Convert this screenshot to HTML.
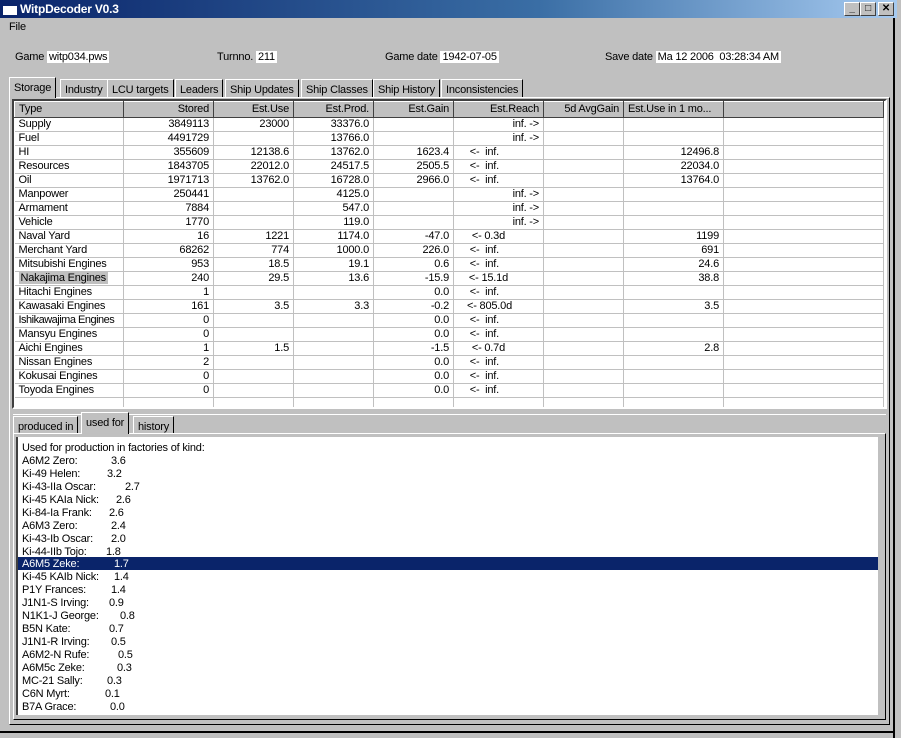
<!DOCTYPE html>
<html><head><meta charset="utf-8"><style>
*{margin:0;padding:0;box-sizing:border-box}
body{width:901px;height:738px;background:#c0c0c0;font-family:"Liberation Sans",sans-serif;font-size:11px;letter-spacing:-0.2px;color:#000;position:relative;overflow:hidden}
.a{position:absolute;white-space:nowrap}
.title{left:0;top:0;width:897px;height:18px;background:linear-gradient(90deg,#0a246a,#3a6ea5 60%,#a6caf0);color:#fff;font-weight:bold;font-size:12px;line-height:18px;padding-left:20px}
.btn{top:2px;width:16px;height:14px;background:#c0c0c0;border:1px solid;border-color:#fff #404040 #404040 #fff;color:#000;font-size:10px;line-height:11px;text-align:center;font-weight:bold}
.w{background:#fff;padding:0 2px}
.tab{top:79px;height:19px;border:1px solid;border-color:#fff #000 transparent #fff;border-bottom:none;padding:3px 4px 0;line-height:14px;background:#c0c0c0}
table{border-collapse:collapse;table-layout:fixed}
td{height:14px;line-height:13px;border-right:1px solid #c0c0c0;border-bottom:1px solid #c0c0c0;text-align:right;padding:0 4px;white-space:nowrap;overflow:hidden}
td:first-child{text-align:left}
tr.h td{height:16px;line-height:15px;background:#c0c0c0;border:1px solid;border-color:#fff #404040 #404040 #fff}
.lst div{height:12.95px;line-height:14px;padding-left:4px;position:relative}
.lst b{font-weight:normal;position:absolute;top:0}
</style></head><body>
<div class="a title">WitpDecoder V0.3</div>
<div class="a" style="left:3px;top:3px;width:14px;height:12px;background:#fff;border-top:3px solid #0a246a"></div>
<div class="a btn" style="left:844px">_</div>
<div class="a btn" style="left:860px">□</div>
<div class="a btn" style="left:878px">✕</div>
<div class="a" style="left:893px;top:18px;width:2px;height:720px;background:#000"></div>
<div class="a" style="left:9px;top:21px">File</div>
<div class="a" style="left:15px;top:51px">Game <span class="w">witp034.pws</span></div>
<div class="a" style="left:217px;top:51px">Turnno. <span class="w">211</span></div>
<div class="a" style="left:385px;top:51px">Game date <span class="w">1942-07-05</span></div>
<div class="a" style="left:605px;top:51px">Save date <span class="w">Ma 12 2006 &nbsp;03:28:34 AM</span></div>
<div class="a tab" style="left:9px;top:77px;height:21px;z-index:2">Storage</div>
<div class="a tab" style="left:60px">Industry</div>
<div class="a tab" style="left:107px">LCU targets</div>
<div class="a tab" style="left:175px">Leaders</div>
<div class="a tab" style="left:225px">Ship Updates</div>
<div class="a tab" style="left:301px">Ship Classes</div>
<div class="a tab" style="left:373px">Ship History</div>
<div class="a tab" style="left:441px">Inconsistencies</div>
<div class="a" style="left:9px;top:97px;width:881px;height:628px;border:1px solid;border-color:#fff #000 #000 #fff"></div>
<div class="a" style="left:12px;top:99px;width:875px;height:310px;border:2px solid;border-color:#404040 #fff #fff #404040;background:#fff;overflow:hidden">
<table style="width:870px">
<colgroup><col style="width:109px"><col style="width:90px"><col style="width:80px"><col style="width:80px"><col style="width:80px"><col style="width:90px"><col style="width:80px"><col style="width:100px"><col></colgroup>
<tr class="h"><td>Type</td><td>Stored</td><td>Est.Use</td><td>Est.Prod.</td><td>Est.Gain</td><td>Est.Reach</td><td>5d AvgGain</td><td style="text-align:left">Est.Use in 1 mo...</td><td></td></tr>
<tr><td>Supply</td><td>3849113</td><td>23000</td><td>33376.0</td><td></td><td>inf. -&gt;</td><td></td><td></td><td></td></tr>
<tr><td>Fuel</td><td>4491729</td><td></td><td>13766.0</td><td></td><td>inf. -&gt;</td><td></td><td></td><td></td></tr>
<tr><td>HI</td><td>355609</td><td>12138.6</td><td>13762.0</td><td>1623.4</td><td style="padding-right:44px">&lt;- &nbsp;inf.</td><td></td><td>12496.8</td><td></td></tr>
<tr><td>Resources</td><td>1843705</td><td>22012.0</td><td>24517.5</td><td>2505.5</td><td style="padding-right:44px">&lt;- &nbsp;inf.</td><td></td><td>22034.0</td><td></td></tr>
<tr><td>Oil</td><td>1971713</td><td>13762.0</td><td>16728.0</td><td>2966.0</td><td style="padding-right:44px">&lt;- &nbsp;inf.</td><td></td><td>13764.0</td><td></td></tr>
<tr><td>Manpower</td><td>250441</td><td></td><td>4125.0</td><td></td><td>inf. -&gt;</td><td></td><td></td><td></td></tr>
<tr><td>Armament</td><td>7884</td><td></td><td>547.0</td><td></td><td>inf. -&gt;</td><td></td><td></td><td></td></tr>
<tr><td>Vehicle</td><td>1770</td><td></td><td>119.0</td><td></td><td>inf. -&gt;</td><td></td><td></td><td></td></tr>
<tr><td>Naval Yard</td><td>16</td><td>1221</td><td>1174.0</td><td>-47.0</td><td style="padding-right:38px">&lt;- 0.3d</td><td></td><td>1199</td><td></td></tr>
<tr><td>Merchant Yard</td><td>68262</td><td>774</td><td>1000.0</td><td>226.0</td><td style="padding-right:44px">&lt;- &nbsp;inf.</td><td></td><td>691</td><td></td></tr>
<tr><td>Mitsubishi Engines</td><td>953</td><td>18.5</td><td>19.1</td><td>0.6</td><td style="padding-right:44px">&lt;- &nbsp;inf.</td><td></td><td>24.6</td><td></td></tr>
<tr><td><span style="background:#c0c0c0;padding:0 2px">Nakajima Engines</span></td><td>240</td><td>29.5</td><td>13.6</td><td>-15.9</td><td style="padding-right:35px">&lt;- 15.1d</td><td></td><td>38.8</td><td></td></tr>
<tr><td>Hitachi Engines</td><td>1</td><td></td><td></td><td>0.0</td><td style="padding-right:44px">&lt;- &nbsp;inf.</td><td></td><td></td><td></td></tr>
<tr><td>Kawasaki Engines</td><td>161</td><td>3.5</td><td>3.3</td><td>-0.2</td><td style="padding-right:31px">&lt;- 805.0d</td><td></td><td>3.5</td><td></td></tr>
<tr><td style="letter-spacing:-0.5px">Ishikawajima Engines</td><td>0</td><td></td><td></td><td>0.0</td><td style="padding-right:44px">&lt;- &nbsp;inf.</td><td></td><td></td><td></td></tr>
<tr><td>Mansyu Engines</td><td>0</td><td></td><td></td><td>0.0</td><td style="padding-right:44px">&lt;- &nbsp;inf.</td><td></td><td></td><td></td></tr>
<tr><td>Aichi Engines</td><td>1</td><td>1.5</td><td></td><td>-1.5</td><td style="padding-right:38px">&lt;- 0.7d</td><td></td><td>2.8</td><td></td></tr>
<tr><td>Nissan Engines</td><td>2</td><td></td><td></td><td>0.0</td><td style="padding-right:44px">&lt;- &nbsp;inf.</td><td></td><td></td><td></td></tr>
<tr><td>Kokusai Engines</td><td>0</td><td></td><td></td><td>0.0</td><td style="padding-right:44px">&lt;- &nbsp;inf.</td><td></td><td></td><td></td></tr>
<tr><td>Toyoda Engines</td><td>0</td><td></td><td></td><td>0.0</td><td style="padding-right:44px">&lt;- &nbsp;inf.</td><td></td><td></td><td></td></tr>
<tr><td></td><td></td><td></td><td></td><td></td><td></td><td></td><td></td><td></td></tr>
</table></div>
<div class="a" style="left:13px;top:414px;width:873px;height:1px;background:#fff"></div>
<div class="a tab" style="left:13px;top:416px;height:18px">produced in</div>
<div class="a tab" style="left:81px;top:412px;height:22px;z-index:2">used for</div>
<div class="a tab" style="left:133px;top:416px;height:18px">history</div>
<div class="a" style="left:13px;top:433px;width:873px;height:287px;border:1px solid;border-color:#fff #000 #000 #fff"></div>
<div class="a lst" style="left:16px;top:437px;width:862px;height:278px;background:#fff;padding-top:4px;border-left:2px solid #404040">
<div>Used for production in factories of kind:</div>
<div>A6M2 Zero:<b style="left:93px">3.6</b></div>
<div>Ki-49 Helen:<b style="left:89px">3.2</b></div>
<div>Ki-43-IIa Oscar:<b style="left:107px">2.7</b></div>
<div>Ki-45 KAIa Nick:<b style="left:98px">2.6</b></div>
<div>Ki-84-Ia Frank:<b style="left:91px">2.6</b></div>
<div>A6M3 Zero:<b style="left:93px">2.4</b></div>
<div>Ki-43-Ib Oscar:<b style="left:93px">2.0</b></div>
<div>Ki-44-IIb Tojo:<b style="left:88px">1.8</b></div>
<div style="background:#0a246a;color:#fff">A6M5 Zeke:<b style="left:96px">1.7</b></div>
<div>Ki-45 KAIb Nick:<b style="left:96px">1.4</b></div>
<div>P1Y Frances:<b style="left:93px">1.4</b></div>
<div>J1N1-S Irving:<b style="left:91px">0.9</b></div>
<div>N1K1-J George:<b style="left:102px">0.8</b></div>
<div>B5N Kate:<b style="left:91px">0.7</b></div>
<div>J1N1-R Irving:<b style="left:93px">0.5</b></div>
<div>A6M2-N Rufe:<b style="left:100px">0.5</b></div>
<div>A6M5c Zeke:<b style="left:99px">0.3</b></div>
<div>MC-21 Sally:<b style="left:89px">0.3</b></div>
<div>C6N Myrt:<b style="left:87px">0.1</b></div>
<div>B7A Grace:<b style="left:92px">0.0</b></div>
</div>
<div class="a" style="left:0;top:731px;width:895px;height:2px;background:#000"></div>
</body></html>
